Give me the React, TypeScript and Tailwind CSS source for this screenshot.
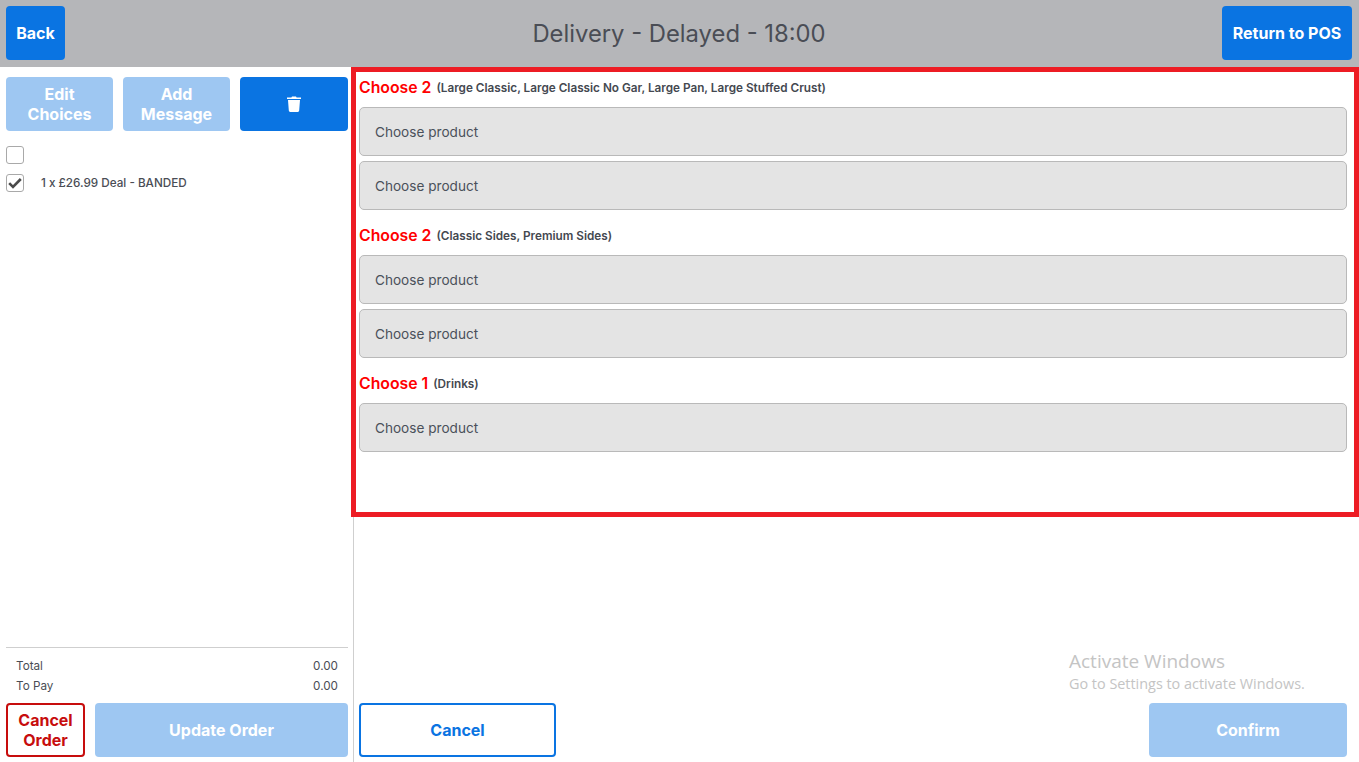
import React from "react";

const Choice = () => (
  <button className="h-[49px] w-full shrink-0 rounded-[5px] border border-[#b9b9b9] bg-[#e4e4e4] pt-[1px] pl-[15px] text-left text-[13.6px] text-[#4a505a]">
    Choose product
  </button>
);

const Heading = ({ n, d }: { n: string; d: string }) => (
  <div className="mb-[5px] flex h-[20px] items-center gap-[5px] pt-[2px] whitespace-nowrap">
    <span className="text-[15.8px] font-semibold text-[#ff0000]">{n}</span>
    <span className="mt-[2px] text-[11.75px] font-semibold text-[#444850]">{d}</span>
  </div>
);

const Light = ({ className, children }: { className: string; children: React.ReactNode }) => (
  <button className={`h-[54px] rounded-[4px] bg-[#9ec7f2] text-base leading-[20px] font-bold text-white ${className}`}>
    {children}
  </button>
);

const Box = ({ checked }: { checked?: boolean }) => (
  <span className="flex h-[18px] w-[18px] items-center justify-center rounded-[3px] border border-[#a9a9a9] bg-white">
    {checked && (
      <svg viewBox="0 0 14 14" className="h-[14px] w-[14px]">
        <path d="M1.2 7.2 L5 11 L12.8 3" fill="none" stroke="#4a4a4a" strokeWidth="2.6" />
      </svg>
    )}
  </span>
);

export default function App() {
  return (
    <div className="relative flex h-[762px] w-[1359px] flex-col overflow-hidden bg-white font-['Inter',sans-serif]">
      <header className="grid h-[67px] shrink-0 grid-cols-[1fr_auto_1fr] items-start bg-[#b5b6b9] p-[6px] pr-[7px]">
        <button className="h-[54px] w-[59px] rounded-[4px] bg-[#0a74e2] text-base font-bold text-white">Back</button>
        <h1 className="mt-[13px] text-[23.8px] leading-[30px] font-normal text-[#4a4d55]">Delivery - Delayed - 18:00</h1>
        <button className="h-[54px] w-[130px] justify-self-end rounded-[4px] bg-[#0a74e2] text-base font-bold whitespace-nowrap text-white">Return to POS</button>
      </header>

      <div className="flex min-h-0 flex-1">
        <aside className="flex w-[354px] shrink-0 flex-col border-r border-[#cfcfcf] pt-[10px] pr-[5px] pb-[5px] pl-[6px]">
          <div className="flex gap-[10px]">
            <Light className="w-[107px]">Edit<br />Choices</Light>
            <Light className="w-[107px]">Add<br />Message</Light>
            <button className="flex h-[54px] w-[108px] items-center justify-center rounded-[4px] bg-[#0a74e2]">
              <svg viewBox="0 0 14 16" className="h-[16px] w-[14px]" fill="white">
                <path d="M0 1.6 H4.4 L5 .4 H9 L9.6 1.6 H14 V3 H0 Z" />
                <path d="M1 4 H13 L12.2 14.6 Q12.1 16 10.8 16 H3.2 Q1.9 16 1.8 14.6 Z" />
              </svg>
            </button>
          </div>
          <div className="mt-[15px] flex flex-col gap-[10px]">
            <Box />
            <div className="flex items-center">
              <Box checked />
              <span className="mt-[1px] ml-[17px] text-[11.7px] font-medium text-[#4a4d55]">1 x £26.99 Deal - BANDED</span>
            </div>
          </div>
          <div className="mt-auto border-t border-[#cfcfcf] px-[10px] pt-[8px] text-[11.7px] leading-[20px] text-[#4a4d55]">
            <div className="flex justify-between"><span>Total</span><span>0.00</span></div>
            <div className="flex justify-between"><span>To Pay</span><span>0.00</span></div>
          </div>
          <div className="mt-[7px] flex gap-[10px]">
            <button className="h-[54px] w-[79px] rounded-[4px] border-2 border-[#c70d0d] bg-white text-base leading-[20px] font-bold text-[#c70d0d]">Cancel<br />Order</button>
            <Light className="w-[253px]">Update Order</Light>
          </div>
        </aside>

        <main className="flex min-w-0 flex-1 flex-col pt-[10px] pr-[12px] pb-[5px] pl-[5px]">
          <div className="flex flex-col gap-[5px]">
            <Heading n="Choose 2" d="(Large Classic, Large Classic No Gar, Large Pan, Large Stuffed Crust)" />
            <Choice />
            <Choice />
          </div>
          <div className="mt-[15px] flex flex-col gap-[5px]">
            <Heading n="Choose 2" d="(Classic Sides, Premium Sides)" />
            <Choice />
            <Choice />
          </div>
          <div className="mt-[15px] flex flex-col gap-[5px]">
            <Heading n="Choose 1" d="(Drinks)" />
            <Choice />
          </div>
          <div className="mt-auto flex justify-between">
            <button className="h-[54px] w-[197px] rounded-[4px] border-2 border-[#0a74e2] bg-white text-base font-bold text-[#0a74e2]">Cancel</button>
            <Light className="w-[198px]">Confirm</Light>
          </div>
        </main>
      </div>

      <div className="pointer-events-none absolute top-[67px] left-[351px] h-[450px] w-[1008px] border-[5px] border-[#ed1c24]" />

      <div className="pointer-events-none absolute top-[648px] left-[1069px] font-['Open_Sans',sans-serif] text-[#c4c4c4]">
        <div className="text-[19px] leading-[26px]">Activate Windows</div>
        <div className="text-[14.4px] leading-[20px]">Go to Settings to activate Windows.</div>
      </div>
    </div>
  );
}
